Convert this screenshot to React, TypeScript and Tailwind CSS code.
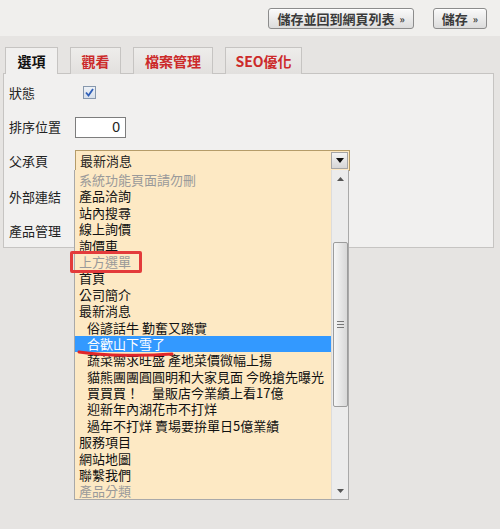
import React from 'react';

// 下拉選單項目（level 1 代表子頁面，會縮排）
type Item = { text: string; level?: number; disabled?: boolean; selected?: boolean };

const items: Item[] = [
  { text: '系統功能頁面請勿刪', disabled: true },
  { text: '產品洽詢' },
  { text: '站內搜尋' },
  { text: '線上詢價' },
  { text: '詢價車' },
  { text: '上方選單', disabled: true },
  { text: '首頁' },
  { text: '公司簡介' },
  { text: '最新消息' },
  { text: '俗諺話牛 勤奮又踏實', level: 1 },
  { text: '合歡山下雪了', level: 1, selected: true },
  { text: '蔬菜需求旺盛 產地菜價微幅上揚', level: 1 },
  { text: '貓熊團團圓圓明和大家見面 今晚搶先曝光', level: 1 },
  { text: '買買買！　量販店今業績上看17億', level: 1 },
  { text: '迎新年內湖花市不打烊', level: 1 },
  { text: '過年不打烊 賣場要拚單日5億業績', level: 1 },
  { text: '服務項目' },
  { text: '網站地圖' },
  { text: '聯繫我們' },
  { text: '產品分類', disabled: true },
];

const tabs = [
  { label: '選項', active: true, w: 'w-[53px]' },
  { label: '觀看', w: 'w-[51px]' },
  { label: '檔案管理', w: 'w-[80px]' },
  { label: 'SEO優化', w: 'w-[77px]' },
];

const SaveButton: React.FC<{ label: string }> = ({ label }) => (
  <button className="h-[21px] px-[8px] flex items-center gap-[3px] rounded-[3px] border border-[#8c8c8c] bg-gradient-to-b from-[#fafafa] to-[#dcdcdc] text-[13px] font-bold text-[#3a3a3a] leading-none shadow-[inset_0_1px_0_#fff]">
    {label}
    <span className="text-[10px] ml-[2px]">»</span>
  </button>
);

const App: React.FC = () => {
  return (
    <div className="relative w-[500px] h-[529px] overflow-hidden bg-[#e6e4e2] font-['Noto_Sans_CJK_TC','Noto_Sans',sans-serif] text-[13px] text-[#222]">
      {/* 上方按鈕列 */}
      <div className="h-[36px] bg-[#f0efed] flex justify-end items-start pt-[8px] pr-[13px] gap-[19px]">
        <SaveButton label="儲存並回到網頁列表" />
        <SaveButton label="儲存" />
      </div>

      {/* 分頁標籤 */}
      <div className="mt-[11px] pl-[5px] flex gap-[12px] h-[26px] relative z-10">
        {tabs.map((t) => (
          <div
            key={t.label}
            className={`${t.w} h-[27px] flex items-center justify-center border border-b-0 border-[#c6c4c2] text-[14px] font-bold ${
              t.active ? 'bg-[#f1f0ef] text-[#111]' : 'bg-gradient-to-b from-[#eeedeb] to-[#e2e0de] text-[#cc2a2a]'
            }`}
          >
            {t.label}
          </div>
        ))}
      </div>

      {/* 設定面板 */}
      <div className="ml-[3px] w-[491px] h-[175px] bg-[#f1f0ef] border border-[#c6c4c2] flex flex-col text-[#222]">
        <div className="h-[37px] flex items-center pl-[5px]">
          <span className="w-[71px]">狀態</span>
          <span className="ml-[3px] w-[13px] h-[13px] border border-[#8798ad] bg-gradient-to-b from-[#eef2f7] to-[#d7dfea] flex items-center justify-center">
            <svg width="11" height="11" viewBox="0 0 11 11">
              <path d="M2 5.5 L4.5 8.5 L9 2" fill="none" stroke="#2f5fb8" strokeWidth="1.8" />
            </svg>
          </span>
        </div>
        <div className="h-[32px] flex items-center pl-[5px]">
          <span className="w-[66px]">排序位置</span>
          <div className="w-[51px] h-[21px] bg-white border border-[#7d7d7d] flex items-center justify-end pr-[5px] text-[14px] font-['Liberation_Sans',sans-serif]">
            0
          </div>
        </div>
        <div className="h-[35px] flex items-center pl-[5px]">
          <span className="w-[66px]">父承頁</span>
          <div className="w-[275px] h-[21px] bg-[#fde9c4] border border-[#b59c69] flex items-center">
            <span className="flex-1 pl-[4px]">最新消息</span>
            <span className="w-[17px] h-[17px] mr-[1px] bg-gradient-to-b from-[#f4f4f4] to-[#d6d6d6] border border-[#a5a5a5] flex items-center justify-center">
              <svg width="8" height="5" viewBox="0 0 8 5">
                <path d="M0 0 H8 L4 5 Z" fill="#111" />
              </svg>
            </span>
          </div>
        </div>
        <div className="h-[37px] flex items-center pl-[5px]">
          <span>外部連結</span>
        </div>
        <div className="h-[31px] flex items-center pl-[5px]">
          <span>產品管理</span>
        </div>
      </div>

      {/* 展開的下拉清單 */}
      <div className="absolute left-[74px] top-[170px] w-[275px] h-[330px] bg-[#fde9c4] border border-[#a9a9a9] border-t-0 flex">
        <div className="flex-1 pt-[2px]">
          {items.map((it) => (
            <div
              key={it.text}
              className={`h-[16.4px] leading-[16.4px] whitespace-nowrap ${it.level ? 'pl-[12px]' : 'pl-[4px]'} ${
                it.selected ? 'bg-[#3399ff] text-white' : it.disabled ? 'text-[#9a9a9a]' : 'text-[#111]'
              }`}
            >
              {it.text}
            </div>
          ))}
        </div>
        {/* 捲軸 */}
        <div className="w-[17px] bg-[#ececec] border-l border-[#dcdcdc] flex flex-col items-center">
          <div className="h-[17px] flex items-center justify-center">
            <svg width="7" height="4" viewBox="0 0 7 4">
              <path d="M0 4 H7 L3.5 0 Z" fill="#555" />
            </svg>
          </div>
          <div className="mt-[55px] w-[15px] h-[165px] rounded-[2px] border border-[#9c9c9c] bg-gradient-to-r from-[#f6f6f6] to-[#d8d8d8] flex items-center justify-center">
            <div className="flex flex-col gap-[2px]">
              <span className="w-[7px] h-px bg-[#777]" />
              <span className="w-[7px] h-px bg-[#777]" />
              <span className="w-[7px] h-px bg-[#777]" />
            </div>
          </div>
          <div className="flex-1" />
          <div className="h-[17px] flex items-center justify-center">
            <svg width="7" height="4" viewBox="0 0 7 4">
              <path d="M0 0 H7 L3.5 4 Z" fill="#555" />
            </svg>
          </div>
        </div>
      </div>

      {/* 標註：紅框與紅色底線 */}
      <div className="absolute left-[70px] top-[251px] w-[72px] h-[22px] border-[3px] border-[#e33b3b] rounded-[2px]" />
      <svg className="absolute left-[76px] top-[347px]" width="100" height="12" viewBox="0 0 100 12">
        <path d="M3 5 C 30 9, 70 9, 96 7" fill="none" stroke="#e0262a" strokeWidth="3" strokeLinecap="round" />
      </svg>
    </div>
  );
};

export default App;
